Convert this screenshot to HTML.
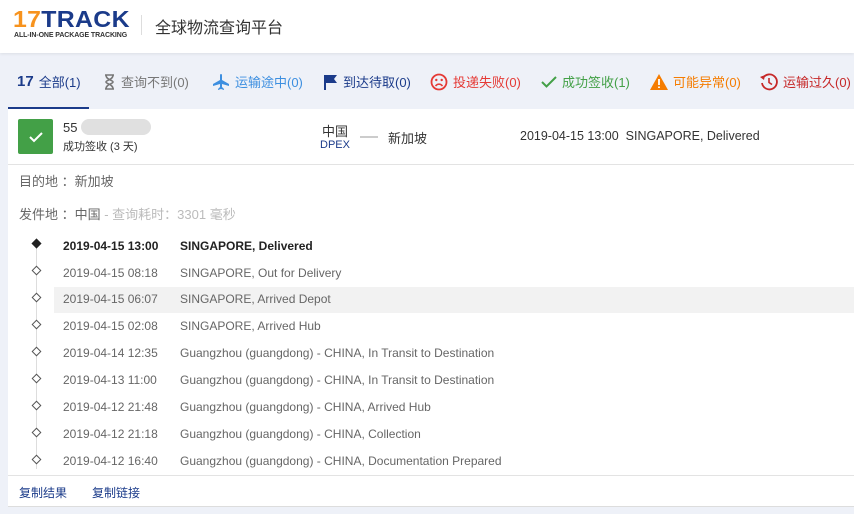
<!DOCTYPE html>
<html><head><meta charset="utf-8"><style>
*{margin:0;padding:0;box-sizing:border-box}
body{width:854px;height:514px;overflow:hidden;background:#eef1f8;font-family:"Liberation Sans","Noto Sans CJK SC",sans-serif;color:#333;position:relative}
.hdr{position:absolute;left:0;top:0;width:854px;height:53px;background:#fff;box-shadow:0 1px 3px rgba(0,0,0,.08)}
.abs{position:absolute;white-space:nowrap}
.tab{position:absolute;top:72px;font-size:13px;display:flex;align-items:center;gap:5px}
.card{position:absolute;left:8px;top:109px;width:846px;height:398px;background:#fff;border-bottom:1px solid #ddd}
.tl{position:absolute;left:0;font-size:12px;color:#666;white-space:nowrap}
.tl .d{position:absolute;left:63px}
.tl .e{position:absolute;left:180px}
.dia{position:absolute;left:33px;width:7px;height:7px;border:1px solid #555;background:#fff;transform:rotate(45deg)}
</style></head><body>
<div class="hdr">
 <div class="abs" style="left:13px;top:6px;font-size:23px;font-weight:bold;letter-spacing:0.3px;color:#1b3b8a;transform:scaleX(1.08);transform-origin:left"><span style="color:#f7931e">17</span>TRACK</div>
 <div class="abs" style="left:14px;top:32px;font-size:7px;font-weight:bold;color:#333;letter-spacing:-0.1px">ALL-IN-ONE PACKAGE TRACKING</div>
 <div class="abs" style="left:141px;top:15px;width:1px;height:20px;background:#ddd"></div>
 <div class="abs" style="left:155px;top:14px;font-size:16px;color:#333">全球物流查询平台</div>
</div>
<div class="tab" style="left:17px;color:#1b3b8a"><b style="font-size:15px">17</b>全部(1)</div>
<div class="abs" style="left:8px;top:107px;width:81px;height:2px;background:#1b3b8a"></div>
<div class="tab" style="left:103px;color:#777"><svg width="13" height="16" viewBox="0 0 13 16"><path d="M2 1h9M2 15h9M3 1c0 5 7 5 7 7s-7 2-7 7M10 1c0 5-7 5-7 7s7 2 7 7" fill="none" stroke="#777" stroke-width="1.6"/></svg>查询不到(0)</div>
<div class="tab" style="left:212px;color:#3d8fe0"><svg width="18" height="16" viewBox="0 0 18 16"><path d="M9 0c1 0 1 1 1 2v4l7 4v2l-7-2v3l2 2v1l-3-1-3 1v-1l2-2v-3l-7 2v-2l7-4V2c0-1 0-2 1-2z" fill="#3d8fe0"/></svg>运输途中(0)</div>
<div class="tab" style="left:323px;color:#1b3b8a"><svg width="15" height="16" viewBox="0 0 15 16"><path d="M1 1h2v15H1zM3 1h11l-3 4 3 4H3z" fill="#1b3b8a"/></svg>到达待取(0)</div>
<div class="tab" style="left:430px;color:#e53935"><svg width="18" height="18" viewBox="0 0 18 18"><circle cx="9" cy="9" r="7.5" fill="none" stroke="#e53935" stroke-width="1.8"/><circle cx="6.3" cy="7" r="1.2" fill="#e53935"/><circle cx="11.7" cy="7" r="1.2" fill="#e53935"/><path d="M5.5 13c2-2.5 5-2.5 7 0" fill="none" stroke="#e53935" stroke-width="1.6"/></svg>投递失败(0)</div>
<div class="tab" style="left:541px;color:#43a047"><svg width="16" height="14" viewBox="0 0 16 14"><path d="M1 7l4.5 4.5L15 2" fill="none" stroke="#43a047" stroke-width="2"/></svg>成功签收(1)</div>
<div class="tab" style="left:650px;color:#f57c00"><svg width="18" height="16" viewBox="0 0 18 16"><path d="M9 0l9 16H0z" fill="#f57c00"/><path d="M9 5v6M9 12.5v1.5" stroke="#fff" stroke-width="1.8"/></svg>可能异常(0)</div>
<div class="tab" style="left:760px;color:#c62828"><svg width="18" height="18" viewBox="0 0 18 18"><path d="M3 5a7.5 7.5 0 1 1-1 5" fill="none" stroke="#c62828" stroke-width="1.8"/><path d="M0 4l4 3 1-5z" fill="#c62828"/><path d="M9 5v4.5l3 2" fill="none" stroke="#c62828" stroke-width="1.6"/></svg>运输过久(0)</div>

<div class="card">
 <div class="abs" style="left:10px;top:10px;width:35px;height:35px;background:#43a047;border-radius:2px"><svg width="35" height="35" viewBox="0 0 35 35"><path d="M12 18l4 4 8-8" fill="none" stroke="#fff" stroke-width="2"/></svg></div>
 <div class="abs" style="left:55px;top:11px;font-size:13px;color:#333">55</div>
 <div class="abs" style="left:73px;top:10px;width:70px;height:16px;background:#e0e0e0;border-radius:8px"></div>
 <div class="abs" style="left:55px;top:29px;font-size:11px;color:#333">成功签收 (3 天)</div>
 <div class="abs" style="left:314px;top:12px;font-size:13px;color:#333">中国</div>
 <div class="abs" style="left:312px;top:30px;font-size:11px;color:#1b3b8a">DPEX</div>
 <div class="abs" style="left:352px;top:27px;width:18px;height:2px;background:#ccc"></div>
 <div class="abs" style="left:380px;top:19px;font-size:13px;color:#333">新加坡</div>
 <div class="abs" style="left:512px;top:20px;font-size:12.5px;color:#333">2019-04-15 13:00&nbsp; SINGAPORE, Delivered</div>
 <div class="abs" style="left:0;top:55px;width:846px;height:1px;background:#e3e3e3"></div>
 <div class="abs" style="left:11px;top:62px;font-size:13px;color:#666">目的地 ：新加坡</div>
 <div class="abs" style="left:11px;top:95px;font-size:13px;color:#666">发件地 ：中国 <span style="color:#bbb">- 查询耗时：3301 毫秒</span></div>
 <div class="abs" style="left:28px;top:135px;width:1px;height:225px;background:#ddd"></div>
 <div class="abs" style="left:46px;top:178px;width:800px;height:26px;background:#f2f2f2"></div>
</div>
<div style="position:absolute;left:0;top:0">
 <div class="dia" style="top:240px;background:#222;border-color:#222"></div>
 <div class="tl" style="top:239px;color:#222;font-weight:bold"><span class="d">2019-04-15 13:00</span><span class="e">SINGAPORE, Delivered</span></div>
 <div class="dia" style="top:267px"></div><div class="tl" style="top:266px"><span class="d">2019-04-15 08:18</span><span class="e">SINGAPORE, Out for Delivery</span></div>
 <div class="dia" style="top:294px"></div><div class="tl" style="top:292px"><span class="d">2019-04-15 06:07</span><span class="e">SINGAPORE, Arrived Depot</span></div>
 <div class="dia" style="top:321px"></div><div class="tl" style="top:319px"><span class="d">2019-04-15 02:08</span><span class="e">SINGAPORE, Arrived Hub</span></div>
 <div class="dia" style="top:348px"></div><div class="tl" style="top:346px"><span class="d">2019-04-14 12:35</span><span class="e">Guangzhou (guangdong) - CHINA, In Transit to Destination</span></div>
 <div class="dia" style="top:375px"></div><div class="tl" style="top:373px"><span class="d">2019-04-13 11:00</span><span class="e">Guangzhou (guangdong) - CHINA, In Transit to Destination</span></div>
 <div class="dia" style="top:402px"></div><div class="tl" style="top:400px"><span class="d">2019-04-12 21:48</span><span class="e">Guangzhou (guangdong) - CHINA, Arrived Hub</span></div>
 <div class="dia" style="top:429px"></div><div class="tl" style="top:427px"><span class="d">2019-04-12 21:18</span><span class="e">Guangzhou (guangdong) - CHINA, Collection</span></div>
 <div class="dia" style="top:456px"></div><div class="tl" style="top:454px"><span class="d">2019-04-12 16:40</span><span class="e">Guangzhou (guangdong) - CHINA, Documentation Prepared</span></div>
</div>
<div class="abs" style="left:8px;top:475px;width:846px;height:1px;background:#e3e3e3"></div>
<div class="abs" style="left:19px;top:484px;font-size:12px;color:#1b3b8a">复制结果</div>
<div class="abs" style="left:92px;top:484px;font-size:12px;color:#1b3b8a">复制链接</div>
</body></html>
